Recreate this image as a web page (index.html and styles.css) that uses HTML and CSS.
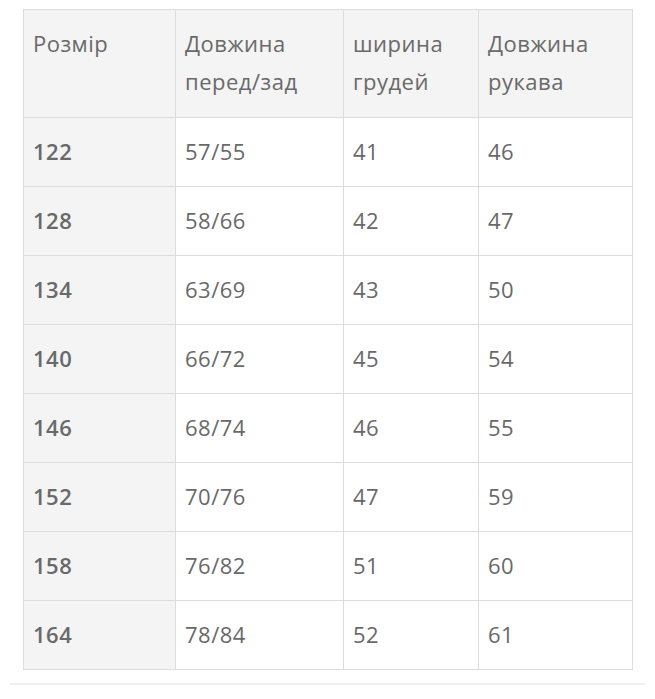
FILE: index.html
```html
<!DOCTYPE html>
<html lang="uk">
<head>
<meta charset="utf-8">
<link rel="stylesheet" href="styles.css">
</head>
<body>
<div class="wrap">
  <table class="sizes">
    <colgroup>
      <col class="c1"><col class="c2"><col class="c3"><col class="c4">
    </colgroup>
    <thead>
      <tr><th>Розмір</th><th>Довжина перед/зад</th><th>ширина грудей</th><th>Довжина рукава</th></tr>
    </thead>
    <tbody>
      <tr><th>122</th><td>57/55</td><td>41</td><td>46</td></tr>
      <tr><th>128</th><td>58/66</td><td>42</td><td>47</td></tr>
      <tr><th>134</th><td>63/69</td><td>43</td><td>50</td></tr>
      <tr><th>140</th><td>66/72</td><td>45</td><td>54</td></tr>
      <tr><th>146</th><td>68/74</td><td>46</td><td>55</td></tr>
      <tr><th>152</th><td>70/76</td><td>47</td><td>59</td></tr>
      <tr><th>158</th><td>76/82</td><td>51</td><td>60</td></tr>
      <tr><th>164</th><td>78/84</td><td>52</td><td>61</td></tr>
    </tbody>
  </table>
</div>
</body>
</html>
```
FILE: styles.css
```css
html, body {
  margin: 0;
  padding: 0;
  background: #fff;
}
body {
  font-family: "Open Sans", "Noto Sans", sans-serif;
  color: #696969;
}
.wrap {
  margin: 0 10px;
  padding: 9px 13px 13px 13px;
  border-bottom: 2px solid #efefef;
}
.sizes {
  border-collapse: collapse;
  width: 609px;
  table-layout: fixed;
  font-size: 22px;
  line-height: 38px;
  letter-spacing: 0.5px;
}
.c1 { width: 152px; }
.c2 { width: 168px; }
.c3 { width: 135px; }
.c4 { width: 154px; }
.sizes th, .sizes td {
  border: 1px solid #dcdcdc;
  padding: 14px 9px 16px;
  text-align: left;
  vertical-align: top;
  font-weight: 400;
}
.sizes thead th {
  background: #f4f4f4;
  padding-bottom: 17px;
}
.sizes tbody th {
  background: #f4f4f4;
  font-weight: 600;
}
```
